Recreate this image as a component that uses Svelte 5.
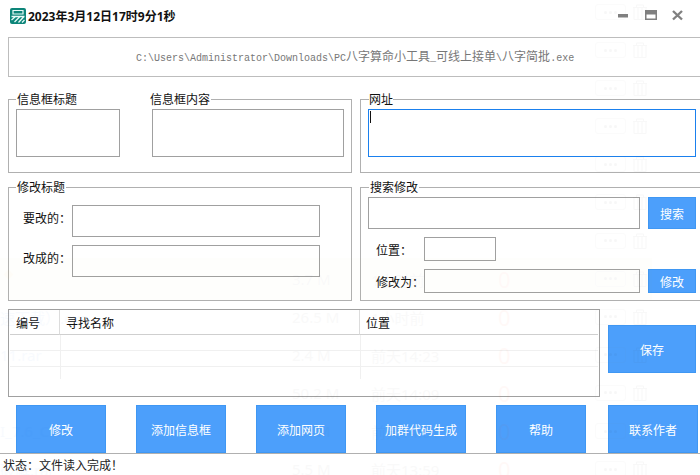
<script>
  const ghost = [
    {}, {}, {}, {}, {}, {}, {},
    { band: true, size: '3.7 M', time: '1小时前', count: '0', mark: true },
    { name: '速下载）.exe', size: '26.5 M', time: '1小时前', count: '0' },
    { name: '11.rar', size: '2.4 M', time: '前天14:23', count: '0' },
    { name: '', size: '50.2 M', time: '前天14:09', count: '0' },
    { name: 'I_7.6_Cl...', size: '8.4 M', time: '前天14:01', count: '0' },
    { name: '破解.rar', size: '5.5 M', time: '前天13:59', count: '0' }
  ];
  const bottomButtons = ['修改', '添加信息框', '添加网页', '加群代码生成', '帮助', '联系作者'];
  const tableRows = [0, 1, 2];
  const pathParts = [
    { t: 'C:\\Users\\Administrator\\Downloads\\PC', cjk: false },
    { t: '八字算命小工具', cjk: true },
    { t: '_', cjk: false },
    { t: '可线上接单', cjk: true },
    { t: '\\', cjk: false },
    { t: '八字简批', cjk: true },
    { t: '.exe', cjk: false }
  ];
</script>

<div class="win">
  <header class="titlebar">
    <svg class="logo" viewBox="0 0 16 16" width="16" height="16" aria-hidden="true">
      <rect width="16" height="16" rx="2" fill="#0d8579" />
      <path d="M3 2.5h10v3.5H3z" fill="none" stroke="#e8fbf8" stroke-width="1.2" />
      <path d="M1.5 8.5h13M1.5 12l4-3.5M4.5 14l5.5-5.5M8.5 14.5l5.5-6M12 14.5l2.5-2.5" stroke="#e8fbf8" stroke-width="1.3" fill="none" />
    </svg>
    <span class="title">2023年3月12日17时9分1秒</span>
    <div class="winbtns">
      <svg width="70" height="14" viewBox="0 0 70 14" aria-hidden="true">
        <rect x="0" y="5" width="10" height="3.5" fill="#808080" />
        <path d="M27 1h12v10H27z M28.5 5.5v4h9v-4z" fill="#808080" fill-rule="evenodd" />
        <path d="M55 2l9 8.5M64 2l-9 8.5" stroke="#808080" stroke-width="2.4" fill="none" />
      </svg>
    </div>
  </header>

  <div class="pathbox">{#each pathParts as p}<span class:cjk={p.cjk}>{p.t}</span>{/each}</div>

  <div class="groups">
    <fieldset class="g1">
      <legend class="two"><span>信息框标题</span><span>信息框内容</span></legend>
      <div class="row1">
        <input class="f w104" />
        <input class="f w192" />
      </div>
    </fieldset>

    <fieldset class="g1 open">
      <legend class="wz">网址</legend>
      <div class="urlwrap">
        <input class="f url" />
        <span class="caret"></span>
      </div>
    </fieldset>

    <fieldset class="g2">
      <legend>修改标题</legend>
      <div class="titleform">
        <div class="line"><span class="lab">要改的：</span><input class="f w248" /></div>
        <div class="line"><span class="lab">改成的：</span><input class="f w248" /></div>
      </div>
    </fieldset>

    <fieldset class="g2 open">
      <legend class="ss">搜索修改</legend>
      <div class="searchform">
        <div class="line"><input class="f w272" /><button class="btn small tall">搜索</button></div>
        <div class="line in"><span class="lab2">位置：</span><input class="f w72" /></div>
        <div class="line in"><span class="lab2">修改为：</span><input class="f w216" /><button class="btn small">修改</button></div>
      </div>
    </fieldset>
  </div>

  <div class="mid">
    <div class="tablebox">
      <table>
        <thead>
          <tr><th class="c1">编号</th><th class="c2">寻找名称</th><th>位置</th></tr>
        </thead>
        <tbody>
          {#each tableRows as r}
            <tr class="r{r}"><td></td><td class="bl"></td><td class="bl"></td></tr>
          {/each}
        </tbody>
      </table>
    </div>
    <button class="btn save">保存</button>
  </div>

  <div class="actions">
    {#each bottomButtons as label}
      <button class="btn act">{label}</button>
    {/each}
  </div>

  <footer class="status">状态：文件读入完成！</footer>

  <div class="ghost" aria-hidden="true">
    {#each ghost as g}
      <div class="grow" class:band={g.band}>
        <span class="gname">{#if g.mark}<i class="gmark"></i>{/if}{g.name ?? ''}</span>
        <span class="gsize">{g.size ?? ''}</span>
        <span class="gtime">{g.time ?? ''}</span>
        <span class="gcount">{g.count ?? ''}</span>
        <span class="gpill"><b></b><b></b><b></b></span>
        <svg class="gtrash" width="14" height="16" viewBox="0 0 14 16">
          <path d="M0 3.5h14M3.5 3.5V1h7v2.5M1 3.5V15.5h12V3.5M5 3.5V15.5M9 3.5V15.5" fill="none" stroke="#333" />
        </svg>
      </div>
    {/each}
  </div>
</div>

<style>
  :global(body) { margin: 0; background: #fff; }
  .win {
    position: relative;
    width: 700px;
    height: 475px;
    overflow: hidden;
    background: #fff;
    font-family: "Noto Sans CJK SC", "Noto Sans", sans-serif;
    font-size: 12px;
    color: #111;
  }
  .titlebar {
    height: 37px;
    display: flex;
    align-items: flex-start;
    padding: 8px 0 0 10px;
    box-sizing: border-box;
  }
  .logo { flex: none; }
  .title {
    margin-left: 2px;
    font-family: "Noto Sans", "Noto Sans CJK SC", sans-serif;
    font-weight: 700;
    font-size: 12px;
    line-height: 17px;
    color: #111;
  }
  .winbtns { margin-left: auto; margin-right: 12px; height: 14px; margin-top: 1px; }
  .winbtns svg { display: block; }
  .pathbox {
    margin-left: 8px;
    height: 40px;
    box-sizing: border-box;
    border: 1px solid #bdbdbd;
    border-right: 0;
    padding-left: 127px;
    line-height: 36px;
    font-family: "Liberation Mono", monospace;
    font-size: 10px;
    color: #777;
    white-space: nowrap;
    overflow: hidden;
  }
  .pathbox .cjk { font-family: "Noto Sans CJK SC", sans-serif; font-size: 12px; }
  .groups {
    margin: 14px 0 0 8px;
    display: grid;
    grid-template-columns: 344px 340px;
    grid-template-rows: 82px 122px;
    column-gap: 8px;
    row-gap: 6px;
  }
  fieldset {
    margin: 0;
    padding: 0;
    min-width: 0;
    border: 1px solid #b0b0b0;
  }
  fieldset.open { border-right: 0; margin-right: -8px; }
  legend {
    margin-left: 7px;
    padding: 0 1px;
    line-height: 16px;
    height: 16px;
    font-size: 12px;
    color: #111;
  }
  legend.two { display: flex; width: 193px; justify-content: space-between; box-sizing: content-box; }
  legend.wz { padding: 0; margin-left: 8px; }
  legend.ss { margin-left: 8px; }
  .f {
    display: block;
    margin: 0;
    padding: 0;
    box-sizing: border-box;
    border: 1px solid #a0a0a0;
    background: transparent;
    outline: none;
    border-radius: 0;
  }
  .row1 { display: flex; gap: 32px; padding: 2px 0 0 7px; }
  .w104 { width: 104px; height: 48px; }
  .w192 { width: 192px; height: 48px; }
  .urlwrap { position: relative; padding: 2px 0 0 7px; }
  .url { width: 328px; height: 48px; border-color: #1a80ee; }
  .caret {
    position: absolute;
    left: 9px;
    top: 4px;
    width: 1px;
    height: 12px;
    background: #111;
  }
  .titleform { padding: 10px 0 0 14px; display: flex; flex-direction: column; gap: 8px; }
  .line { display: flex; align-items: center; }
  .lab { width: 49px; flex: none; margin-top: -7px; }
  .w248 { width: 248px; height: 32px; }
  .searchform { padding: 2px 0 0 7px; display: flex; flex-direction: column; gap: 8px; }
  .in { padding-left: 8px; }
  .lab2 { width: 48px; flex: none; }
  .w272 { width: 272px; height: 32px; margin-right: 8px; }
  .w72 { width: 72px; height: 24px; }
  .w216 { width: 216px; height: 24px; margin-right: 8px; }
  .btn {
    margin: 0;
    padding: 0;
    border: 1px solid #3f97f3;
    border-radius: 0;
    background: #4c9ffb;
    color: #fff;
    font-family: inherit;
    font-size: 12px;
    box-sizing: border-box;
  }
  .small { width: 48px; height: 24px; }
  .tall { height: 32px; }
  .mid { display: flex; margin: 8px 0 0 8px; }
  .tablebox {
    width: 592px;
    height: 88px;
    box-sizing: border-box;
    border: 1px solid #a0a0a0;
    padding-left: 1px;
  }
  table {
    border-collapse: separate;
    border-spacing: 0;
    table-layout: fixed;
    width: 588px;
  }
  th {
    padding: 0 0 0 6px;
    font-weight: 400;
    font-size: 12px;
    text-align: left;
    box-sizing: border-box;
    border-bottom: 1px solid #cfcfcf;
    height: 25px;
  }
  th.c1 { width: 50px; border-right: 1px solid #dcdcdc; }
  th.c2 { width: 300px; border-right: 1px solid #dcdcdc; }
  td { padding: 0; height: 16px; box-sizing: border-box; border-bottom: 1px solid #f0f0f0; }
  td.bl { border-left: 1px solid #f0f0f0; }
  tr.r2 td { height: 12px; border-bottom: 0; }
  .save { width: 88px; height: 48px; margin: 16px 0 0 8px; }
  .actions { display: flex; gap: 30px; margin: 8px 0 0 16px; }
  .act { width: 90px; height: 48px; flex: none; }
  .act:last-child { margin-left: -8px; }
  .status {
    height: 22px;
    box-sizing: border-box;
    border-top: 1px solid #b0b0b0;
    padding-left: 3px;
    line-height: 21px;
    color: #222;
  }
  .ghost {
    position: absolute;
    left: 0;
    top: -7px;
    width: 700px;
    opacity: 0.028;
    pointer-events: none;
    font-family: "Noto Sans", "Noto Sans CJK SC", sans-serif;
    font-size: 15px;
  }
  .grow { position: relative; height: 38.1px; }
  .grow.band::before {
    content: "";
    position: absolute;
    left: 0;
    top: -2px;
    width: 652px;
    height: 42px;
    background: #d0d000;
    opacity: 0.3;
  }
  .grow span, .grow svg { position: absolute; white-space: nowrap; }
  .gname { left: 0; top: 9px; color: #1a6ef0; }
  .gmark {
    position: absolute;
    left: 5px;
    top: 2px;
    width: 7px;
    height: 7px;
    background: #f5b000;
    transform: rotate(45deg);
  }
  .gsize { left: 292px; top: 9px; color: #444; }
  .gtime { left: 371px; top: 9px; color: #444; }
  .gcount { left: 498px; top: 4px; color: #ff3a00; font-size: 22px; }
  .gpill {
    left: 595px;
    top: 11px;
    width: 31px;
    height: 16px;
    box-sizing: border-box;
    border: 1px solid #888;
    border-radius: 3px;
    display: flex;
    align-items: center;
    justify-content: center;
    gap: 2px;
  }
  .gpill b { width: 3px; height: 3px; border-radius: 50%; background: #111; }
  .gtrash { left: 633px; top: 11px; }
</style>
